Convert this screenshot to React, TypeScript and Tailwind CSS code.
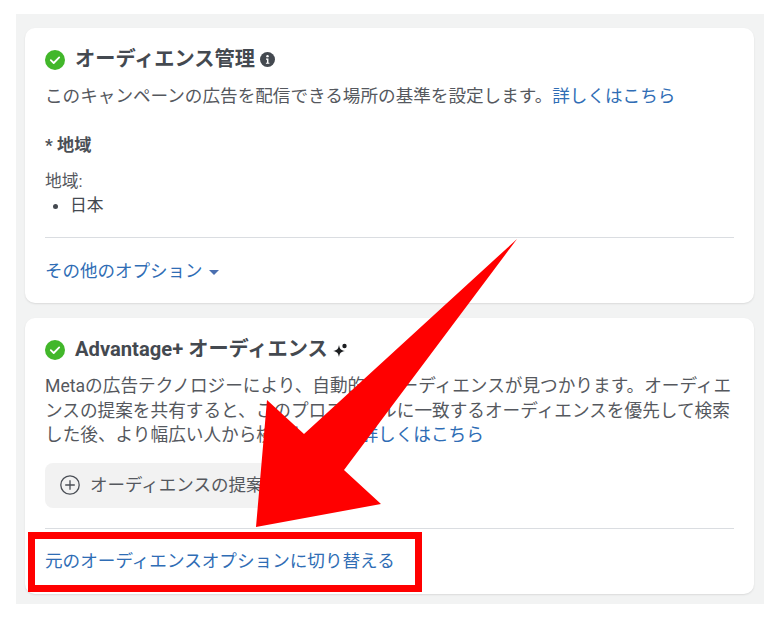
import React from "react";

const font = { fontFamily: '"Roboto","Noto Sans CJK JP",sans-serif' };

function Check() {
  return (
    <svg width="20" height="20" viewBox="0 0 20 20" className="shrink-0">
      <circle cx="10" cy="10" r="10" fill="#42b72a" />
      <path d="M5.8 10.2l2.9 2.8 5.5-5.6" fill="none" stroke="#fff" strokeWidth="1.8" strokeLinecap="round" strokeLinejoin="round" />
    </svg>
  );
}

function Info() {
  return (
    <svg width="15" height="15" viewBox="0 0 16 16" className="shrink-0">
      <circle cx="8" cy="8" r="8" fill="#444950" />
      <circle cx="8" cy="4.4" r="1.3" fill="#fff" />
      <path d="M6.4 7h2.6v4.4h1v1.2H6.3v-1.2h1.1V8.2h-1z" fill="#fff" />
    </svg>
  );
}

function Sparkle() {
  return (
    <svg width="15" height="16" viewBox="0 0 15 16" className="shrink-0">
      <path d="M6 3C6.7 7 7.8 8.2 12 9 7.8 9.8 6.7 11 6 15 5.3 11 4.2 9.8 0 9 4.2 8.2 5.3 7 6 3z" fill="#1c1e21" />
      <circle cx="11.5" cy="4" r="2.2" fill="#1c1e21" />
    </svg>
  );
}

function Plus() {
  return (
    <svg width="20" height="20" viewBox="0 0 20 20" className="shrink-0">
      <circle cx="10" cy="10" r="9.2" fill="none" stroke="#4b4f56" strokeWidth="1.3" />
      <path d="M10 5.2v9.6M5.2 10h9.6" stroke="#4b4f56" strokeWidth="1.3" />
    </svg>
  );
}

export default function App() {
  return (
    <div className="relative w-[782px] h-[623px] overflow-hidden bg-white text-[#55585e]" style={font}>
      <div className="absolute left-4 top-[14px] w-[748px] h-[590px] bg-[#f2f3f3]" />
      <div className="relative flex flex-col gap-[15px] pt-[28px] pl-[25px] w-[754px]">
        <section className="h-[275px] bg-white rounded-[10px] shadow-[0_1px_2px_rgba(0,0,0,0.1)] px-5 flex flex-col">
          <div className="flex items-center gap-2.5 mt-[21px] h-[21px]">
            <Check />
            <h2 className="text-[20.2px] leading-[21px] font-bold text-[#444950] whitespace-nowrap">オーディエンス管理</h2>
            <div className="-ml-[5px]"><Info /></div>
          </div>
          <p className="mt-[14px] text-[17.6px] leading-[24px] whitespace-nowrap">
            このキャンペーンの広告を配信できる場所の基準を設定します。<span className="text-[#2f6db5]">詳しくはこちら</span>
          </p>
          <div className="mt-[25px] text-[17.2px] leading-[24px] font-bold text-[#4b4f56]">* 地域</div>
          <div className="mt-[12px] text-[16.8px] leading-[24px]">地域:</div>
          <ul className="-mt-[1px] text-[16.8px] leading-[26px] text-[#444950] list-disc pl-[25px]">
            <li>日本</li>
          </ul>
          <hr className="mt-[19px] border-t border-[#dadde1]" />
          <div className="mt-[21px] flex items-center gap-[6px] text-[17.5px] leading-[24px] text-[#2f6db5]">
            その他のオプション
            <span className="mt-[3px] w-0 h-0 border-x-[5px] border-x-transparent border-t-[5px] border-t-[#4a6fb0]" />
          </div>
        </section>

        <section className="h-[276px] bg-white rounded-[10px] shadow-[0_1px_2px_rgba(0,0,0,0.1)] px-5 flex flex-col">
          <div className="flex items-center gap-2.5 mt-[21px] h-[21px]">
            <Check />
            <h2 className="text-[20.2px] leading-[21px] font-bold text-[#444950] whitespace-nowrap">Advantage+ オーディエンス</h2>
            <div className="-ml-[5px]"><Sparkle /></div>
          </div>
          <p className="mt-[14px] w-[690px] text-[17.65px] leading-[24.5px] break-all">
            Metaの広告テクノロジーにより、自動的にオーディエンスが見つかります。オーディエンスの提案を共有すると、このプロファイルに一致するオーディエンスを優先して検索した後、より幅広い人から検索します。<span className="text-[#2f6db5]">詳しくはこちら</span>
          </p>
          <div className="mt-[15px] w-[270px] h-[45px] rounded-lg bg-[#f2f2f2] flex items-center gap-[10px] pl-[15px] text-[17.5px] whitespace-nowrap">
            <Plus />
            オーディエンスの提案を追加
          </div>
          <hr className="mt-[20px] border-t border-[#dadde1]" />
          <div className="mt-[20px] text-[17.6px] leading-[24px] text-[#2f6db5] whitespace-nowrap">元のオーディエンスオプションに切り替える</div>
        </section>
      </div>

      <svg className="absolute left-0 top-0 pointer-events-none" width="782" height="623" viewBox="0 0 782 623">
        <polygon points="517,239 344,470 381,504 256,527 267,400 304,434" fill="#ff0000" />
      </svg>
      <div className="absolute left-[28px] top-[532px] w-[394px] h-[60px] border-[7px] border-[#ff0000] pointer-events-none" />
    </div>
  );
}
